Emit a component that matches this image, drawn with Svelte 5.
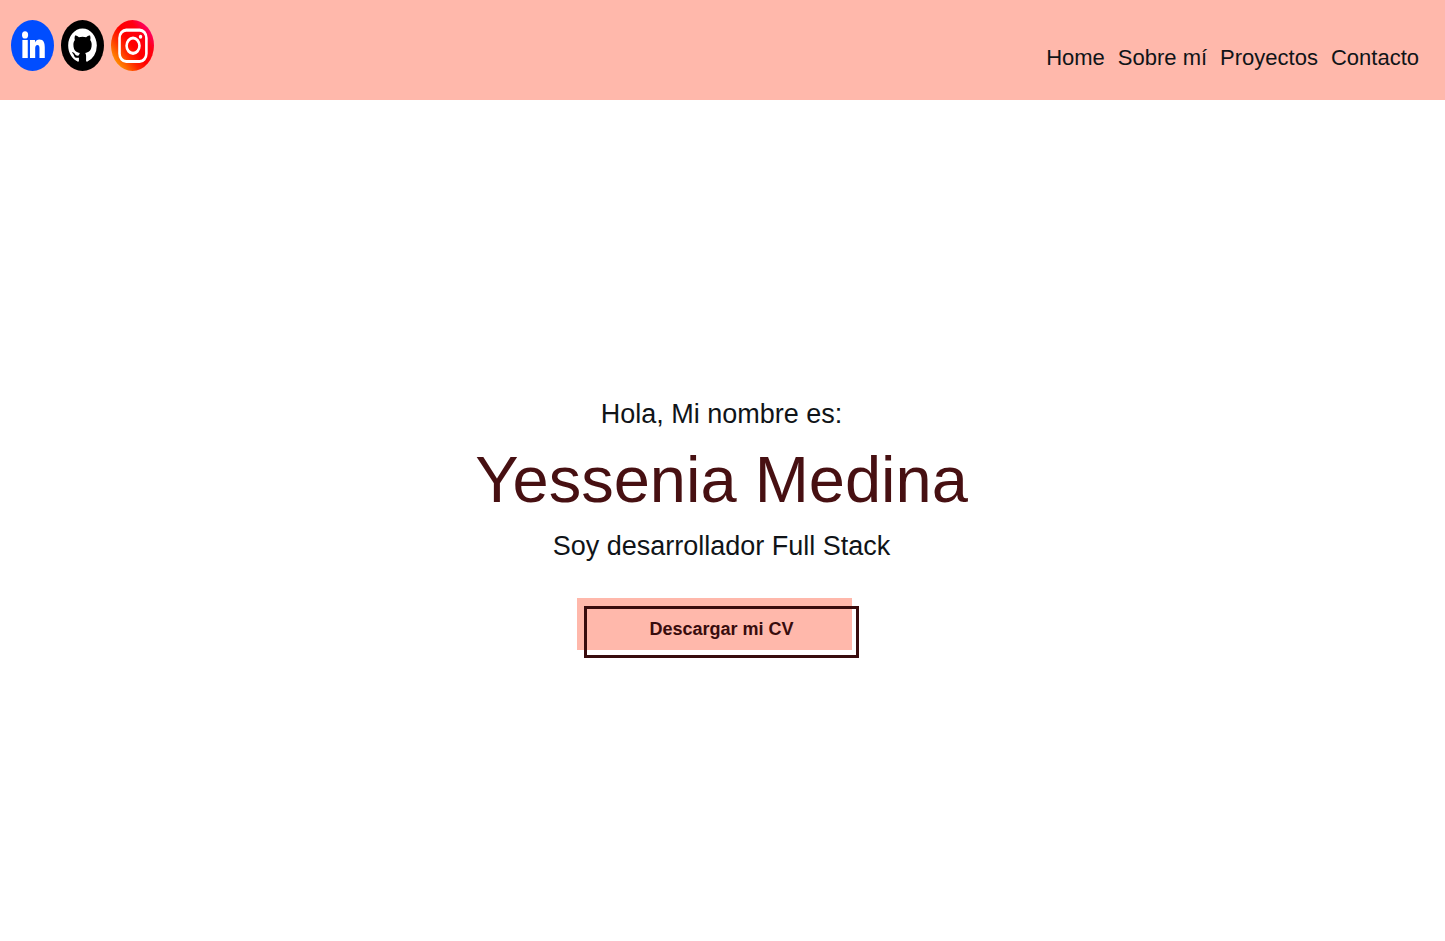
<script>
  const links = ['Home', 'Sobre mí', 'Proyectos', 'Contacto'];
</script>

<div class="page">
  <header>
    <div class="social">
      <a href="#linkedin" aria-label="LinkedIn">
        <svg viewBox="0 0 48 48" preserveAspectRatio="none" aria-hidden="true">
          <circle cx="24" cy="24" r="24" fill="#004dff" />
          <g fill="#fff">
            <circle cx="15.7" cy="14" r="3.4" />
            <rect x="12.7" y="18.8" width="6" height="17" />
            <path d="M21.2 18.8h5.600v2.400c.9-1.600 2.600-2.800 4.900-2.800 4.800 0 6 3.100 6 7.500v9.900h-5.900v-8.900c0-2.100-.5-3.400-2.300-3.400s-2.500 1.300-2.500 3.400v8.900h-5.800z" />
          </g>
        </svg>
      </a>
      <a href="#github" aria-label="GitHub">
        <svg viewBox="0 0 48 48" preserveAspectRatio="none" aria-hidden="true">
          <circle cx="24" cy="24" r="24" fill="#000" />
          <path
            transform="translate(8 8) scale(2)"
            fill="#fff"
            d="M8 0C3.580 0 0 3.580 0 8c0 3.540 2.290 6.530 5.470 7.590.4.070.55-.17.55-.38 0-.19-.01-.82-.01-1.490-2.010.37-2.530-.49-2.690-.94-.09-.23-.48-.94-.82-1.130-.28-.15-.68-.52-.01-.53.63-.01 1.080.58 1.230.82.72 1.210 1.870.87 2.330.66.070-.52.280-.87.510-1.070-1.780-.2-3.640-.89-3.640-3.950 0-.87.310-1.590.820-2.150-.08-.2-.36-1.020.080-2.120 0 0 .670-.21 2.200.820.640-.18 1.320-.27 2-.27s1.360.090 2 .27c1.530-1.040 2.200-.82 2.200-.82.440 1.100.160 1.920.080 2.120.510.560.820 1.270.820 2.150 0 3.070-1.870 3.750-3.650 3.950.290.250.540.730.540 1.480 0 1.070-.01 1.930-.01 2.200 0 .210.150.460.550.380A8.010 8.010 0 0 0 16 8c0-4.420-3.580-8-8-8z"
          />
        </svg>
      </a>
      <a href="#instagram" aria-label="Instagram">
        <svg viewBox="0 0 48 48" preserveAspectRatio="none" aria-hidden="true">
          <defs>
            <linearGradient id="ig" x1="0.1" y1="0.9" x2="0.95" y2="0.15">
              <stop offset="0" stop-color="#ffa000" />
              <stop offset="0.32" stop-color="#ff2a00" />
              <stop offset="0.5" stop-color="#ff0000" />
              <stop offset="0.75" stop-color="#ff0010" />
              <stop offset="1" stop-color="#ff0080" />
            </linearGradient>
          </defs>
          <circle cx="24" cy="24" r="24" fill="url(#ig)" />
          <rect x="9.500" y="9.500" width="30" height="29.500" rx="7.500" fill="none" stroke="#fff" stroke-width="2.900" />
          <circle cx="24.600" cy="24.200" r="7.200" fill="none" stroke="#fff" stroke-width="2.900" />
          <circle cx="33" cy="15.700" r="1.900" fill="#fff" />
        </svg>
      </a>
    </div>
    <nav>
      {#each links as link}
        <a href="#{link}">{link}</a>
      {/each}
    </nav>
  </header>

  <main>
    <p>Hola, Mi nombre es:</p>
    <h1>Yessenia Medina</h1>
    <p>Soy desarrollador Full Stack</p>
    <button type="button">Descargar mi CV</button>
  </main>
</div>

<style>
  :global(body) {
    margin: 0;
    background: #fff;
  }

  .page {
    display: flex;
    flex-direction: column;
    min-height: 100vh;
    font-family: Arial, 'Liberation Sans', sans-serif;
    color: #101418;
  }

  header {
    display: flex;
    justify-content: space-between;
    align-items: flex-start;
    padding: 20px 26px 29px 11px;
    background: #ffb8ab;
  }

  .social {
    display: flex;
    gap: 7px;
  }

  .social svg {
    display: block;
    width: 43px;
    height: 51px;
  }

  nav {
    display: flex;
    gap: 13px;
    padding-top: 25px;
  }

  nav a {
    font-size: 22px;
    line-height: 26px;
    color: inherit;
    text-decoration: none;
  }

  main {
    flex: 1;
    display: flex;
    flex-direction: column;
    align-items: center;
    justify-content: center;
    padding: 10px 2px 0 0;
    isolation: isolate;
  }

  p,
  h1 {
    margin: 0;
    text-align: center;
  }

  p {
    font-size: 27px;
    line-height: 40px;
  }

  h1 {
    font-size: 65px;
    font-weight: 400;
    line-height: 92px;
    color: #471012;
  }

  button {
    position: relative;
    box-sizing: border-box;
    min-width: 275px;
    height: 52px;
    margin-top: 40px;
    padding: 0 16px 4px;
    border: 3px solid #380c0d;
    background: none;
    color: #380c0d;
    font-family: inherit;
    font-size: 18px;
    font-weight: 700;
    cursor: pointer;
  }

  button::before {
    content: '';
    position: absolute;
    z-index: -1;
    inset: -11px 4px 5px -10px;
    background: #ffb8ab;
  }
</style>
